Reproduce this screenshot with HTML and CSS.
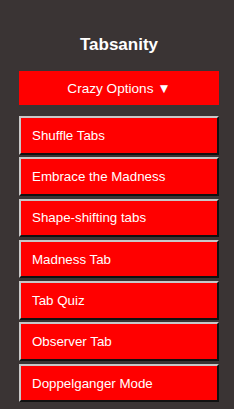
FILE: index.html
```html
<!DOCTYPE html>
<html lang="en">
<head>
<meta charset="UTF-8" />
<meta name="viewport" content="width=device-width, initial-scale=1.0" />
<title>Tabsanity</title>
<link rel="stylesheet" href="styles.css">
</head>
<body>
<div class="app">
  <h1 class="title">Tabsanity</h1>
  <!-- dropdown toggle -->
  <button class="toggle">Crazy Options ▼</button>
  <div class="menu">
    <button class="tab">Shuffle Tabs</button>
    <button class="tab">Embrace the Madness</button>
    <button class="tab">Shape-shifting tabs</button>
    <button class="tab">Madness Tab</button>
    <button class="tab">Tab Quiz</button>
    <button class="tab">Observer Tab</button>
    <button class="tab">Doppelganger Mode</button>
  </div>
</div>
</body>
</html>
```

FILE: styles.css
```css
body {
  margin: 0;
  background-color: #3a3434;
  font-family: "Liberation Sans", Arial, sans-serif;
  color: #fff;
}
.app {
  width: 200px;
  margin-left: 19px;
  padding-top: 35px;
}
.title {
  margin: 0 0 16px;
  font-size: 17px;
  line-height: 20px;
  text-align: center;
}
/* red buttons */
.toggle {
  display: block;
  width: 200px;
  height: 34px;
  border: none;
  background-color: #ff0000;
  color: #fff;
  font-family: "Liberation Sans", Arial, sans-serif;
  font-size: 13.6px;
  cursor: pointer;
}
.menu {
  margin-top: 11px;
}
.tab {
  display: block;
  box-sizing: border-box;
  width: 200px;
  height: 38.5px;
  margin-bottom: 2.8px;
  padding: 0 0 0 11px;
  border: 2px solid;
  border-color: #c8c8c8 #111 #111 #c8c8c8;
  background-color: #ff0000;
  color: #fff;
  font-family: "Liberation Sans", Arial, sans-serif;
  font-size: 13.33px;
  text-align: left;
  cursor: pointer;
}
```
